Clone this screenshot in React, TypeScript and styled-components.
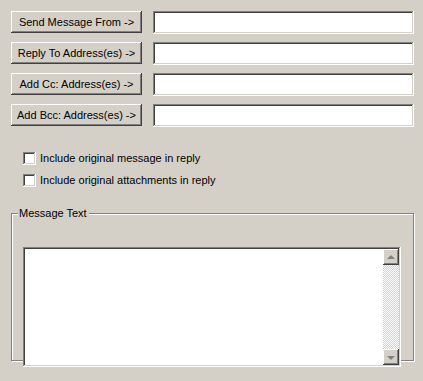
import React from "react";
import styled, { createGlobalStyle } from "styled-components";

const GlobalStyle = createGlobalStyle`
  html, body {
    margin: 0;
    padding: 0;
    background: #d4d0c8;
  }
`;

const StyledWindow = styled.div`
  width: 423px;
  height: 381px;
  box-sizing: border-box;
  padding: 11px 0 0 11px;
  background: #d4d0c8;
  font-family: "Liberation Sans", Arial, sans-serif;
  font-size: 11px;
  color: #000;
  overflow: hidden;
`;

const StyledAddressGrid = styled.div`
  display: grid;
  grid-template-columns: 131px 261px;
  grid-auto-rows: 22px;
  column-gap: 11px;
  row-gap: 9px;
`;

const StyledPushButton = styled.button`
  margin: 0;
  padding: 0;
  border: none;
  background: #d4d0c8;
  font: inherit;
  color: #000;
  box-shadow: inset -1px -1px #404040, inset 1px 1px #fff,
    inset -2px -2px #808080, inset 2px 2px #d4d0c8;
`;

const StyledTextField = styled.input`
  margin: 0;
  padding: 2px 4px;
  border: none;
  outline: none;
  background: #fff;
  font: inherit;
  box-sizing: border-box;
  width: 100%;
  height: 23px;
  box-shadow: inset -1px -1px #fff, inset 1px 1px #808080,
    inset -2px -2px #d4d0c8, inset 2px 2px #404040;
`;

const StyledOptions = styled.div`
  margin-top: 26px;
  padding-left: 12px;
  display: flex;
  flex-direction: column;
  gap: 9px;
`;

const StyledOptionRow = styled.label`
  display: flex;
  align-items: center;
  gap: 4px;
  height: 13px;
  line-height: 13px;
`;

const StyledCheckBox = styled.span`
  width: 13px;
  height: 13px;
  flex: none;
  background: #fff;
  box-shadow: inset -1px -1px #fff, inset 1px 1px #808080,
    inset -2px -2px #d4d0c8, inset 2px 2px #404040;
`;

const StyledGroupBox = styled.div`
  margin-top: 26px;
  width: 403px;
  height: 148px;
  box-sizing: border-box;
  border: 1px solid #808080;
  box-shadow: inset 1px 1px #fff, 1px 1px #fff;
`;

const StyledGroupTitle = styled.div`
  margin: -7px 0 0 6px;
  width: fit-content;
  padding: 0 2px 0 1px;
  line-height: 13px;
  height: 13px;
  background: #d4d0c8;
`;

const StyledTextPane = styled.div`
  margin: 27px 0 0 11px;
  width: 378px;
  height: 120px;
  box-sizing: border-box;
  padding: 2px;
  display: flex;
  background: #fff;
  box-shadow: inset -1px -1px #fff, inset 1px 1px #808080,
    inset -2px -2px #d4d0c8, inset 2px 2px #404040;
`;

const StyledTextArea = styled.textarea`
  flex: 1;
  margin: 0;
  padding: 1px 2px;
  border: none;
  outline: none;
  resize: none;
  font: inherit;
  background: transparent;
  overflow: hidden;
`;

const StyledScrollBar = styled.div`
  width: 16px;
  display: flex;
  flex-direction: column;
  justify-content: space-between;
  background: repeating-conic-gradient(#d4d0c8 0 25%, #fff 0 50%) 0 0 / 2px 2px;
`;

const StyledScrollButton = styled.div<{ $down?: boolean }>`
  width: 16px;
  height: 16px;
  box-sizing: border-box;
  display: flex;
  align-items: center;
  justify-content: center;
  background: #d4d0c8;
  box-shadow: inset -1px -1px #404040, inset 1px 1px #fff,
    inset -2px -2px #808080, inset 2px 2px #d4d0c8;

  &::after {
    content: "";
    width: 0;
    height: 0;
    border-left: 4px solid transparent;
    border-right: 4px solid transparent;
    ${(p) =>
      p.$down
        ? "border-top: 4px solid #808080; margin-top: 1px;"
        : "border-bottom: 4px solid #808080; margin-top: -1px;"}
  }
`;

const addressButtons = [
  "Send Message From ->",
  "Reply To Address(es) ->",
  "Add Cc: Address(es) ->",
  "Add Bcc: Address(es) ->",
];

const App = () => {
  return (
    <StyledWindow>
      <GlobalStyle />
      <StyledAddressGrid>
        {addressButtons.map((label) => (
          <React.Fragment key={label}>
            <StyledPushButton>{label}</StyledPushButton>
            <StyledTextField />
          </React.Fragment>
        ))}
      </StyledAddressGrid>

      <StyledOptions>
        <StyledOptionRow>
          <StyledCheckBox />
          Include original message in reply
        </StyledOptionRow>
        <StyledOptionRow>
          <StyledCheckBox />
          Include original attachments in reply
        </StyledOptionRow>
      </StyledOptions>

      <StyledGroupBox>
        <StyledGroupTitle>Message Text</StyledGroupTitle>
        <StyledTextPane>
          <StyledTextArea />
          <StyledScrollBar>
            <StyledScrollButton />
            <StyledScrollButton $down />
          </StyledScrollBar>
        </StyledTextPane>
      </StyledGroupBox>
    </StyledWindow>
  );
};

export default App;
